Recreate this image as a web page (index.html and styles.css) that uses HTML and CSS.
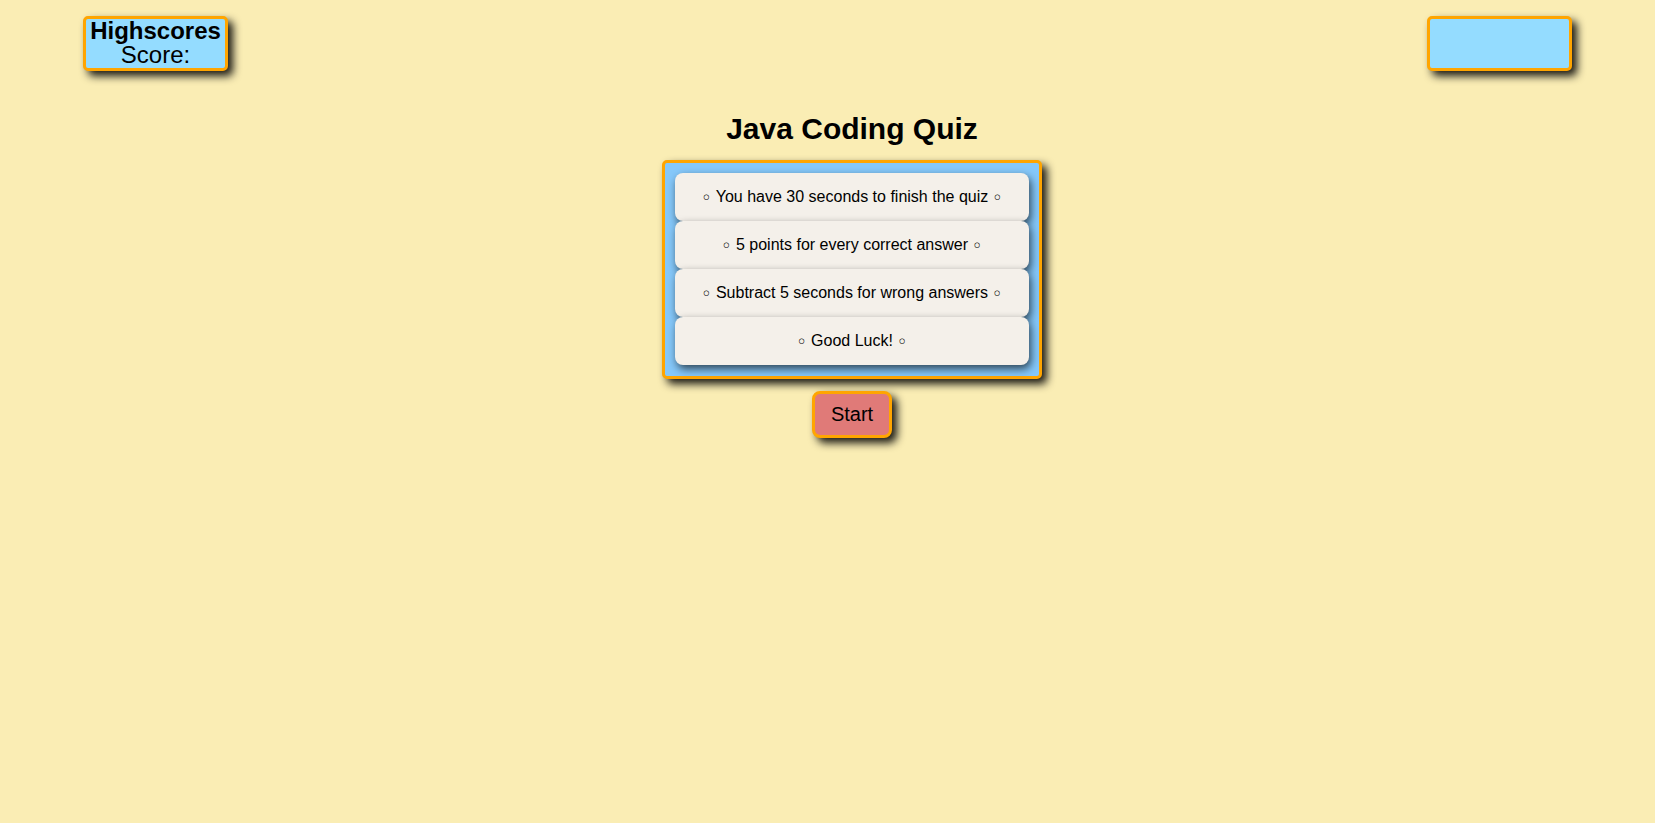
FILE: index.html
```html
<!DOCTYPE html>
<html lang="en">
<head>
<meta charset="utf-8">
<title>Java Coding Quiz</title>
<link rel="stylesheet" href="styles.css">
</head>
<body>
<header class="top-bar">
  <div class="info-box">
    <div class="hs-title">Highscores</div>
    <div class="hs-score">Score:</div>
  </div>
  <div class="info-box timer"></div>
</header>
<main class="main">
  <h1 class="title">Java Coding Quiz</h1>
  <section class="quiz-box">
    <div class="rule"><span class="dot">◦</span> You have 30 seconds to finish the quiz <span class="dot">◦</span></div>
    <div class="rule"><span class="dot">◦</span> 5 points for every correct answer <span class="dot">◦</span></div>
    <div class="rule"><span class="dot">◦</span> Subtract 5 seconds for wrong answers <span class="dot">◦</span></div>
    <div class="rule"><span class="dot">◦</span> Good Luck! <span class="dot">◦</span></div>
  </section>
  <button class="start-btn">Start</button>
</main>
</body>
</html>
```
FILE: styles.css
```css
html, body {
  margin: 0;
  padding: 0;
}
body {
  background: #faedb4;
  font-family: "Liberation Sans", Arial, sans-serif;
  color: #000;
  min-height: 100vh;
}
.top-bar {
  display: flex;
  justify-content: space-between;
  padding: 16px 83px 0;
}
.info-box {
  box-sizing: border-box;
  width: 145px;
  height: 55px;
  border: 3px solid #ffa500;
  border-radius: 5px;
  background: #94dcff;
  box-shadow: 5px 5px 9px rgba(0, 0, 0, 0.9);
  text-align: center;
  font-size: 24px;
  line-height: 24px;
}
.hs-title {
  font-weight: bold;
}
.main {
  display: flex;
  flex-direction: column;
  align-items: center;
  padding-left: 49px;
}
.title {
  font-size: 30px;
  font-weight: bold;
  margin: 41px 0 14px;
}
.quiz-box {
  box-sizing: border-box;
  width: 380px;
  border: 3px solid #ffa500;
  border-radius: 5px;
  background: #85c8fa;
  padding: 10px 10px 11px;
  box-shadow: 5px 5px 9px rgba(0, 0, 0, 0.9);
}
.rule {
  height: 48px;
  display: flex;
  align-items: center;
  justify-content: center;
  gap: 4px;
  background: #f4f0ea;
  border-radius: 8px;
  font-size: 16px;
  box-shadow: 2px 4px 8px rgba(0, 0, 0, 0.65);
  position: relative;
}
.dot {
  font-family: "DejaVu Sans", sans-serif;
  font-size: 18px;
  line-height: 1;
  position: relative;
  top: 1px;
}
.start-btn {
  margin-top: 12px;
  box-sizing: border-box;
  height: 47px;
  padding: 0 16px;
  border: 3px solid #ffa500;
  border-radius: 8px;
  background: #e07a78;
  font-family: "Liberation Sans", Arial, sans-serif;
  font-size: 20px;
  color: #000;
  box-shadow: 5px 5px 9px rgba(0, 0, 0, 0.9);
}
```
